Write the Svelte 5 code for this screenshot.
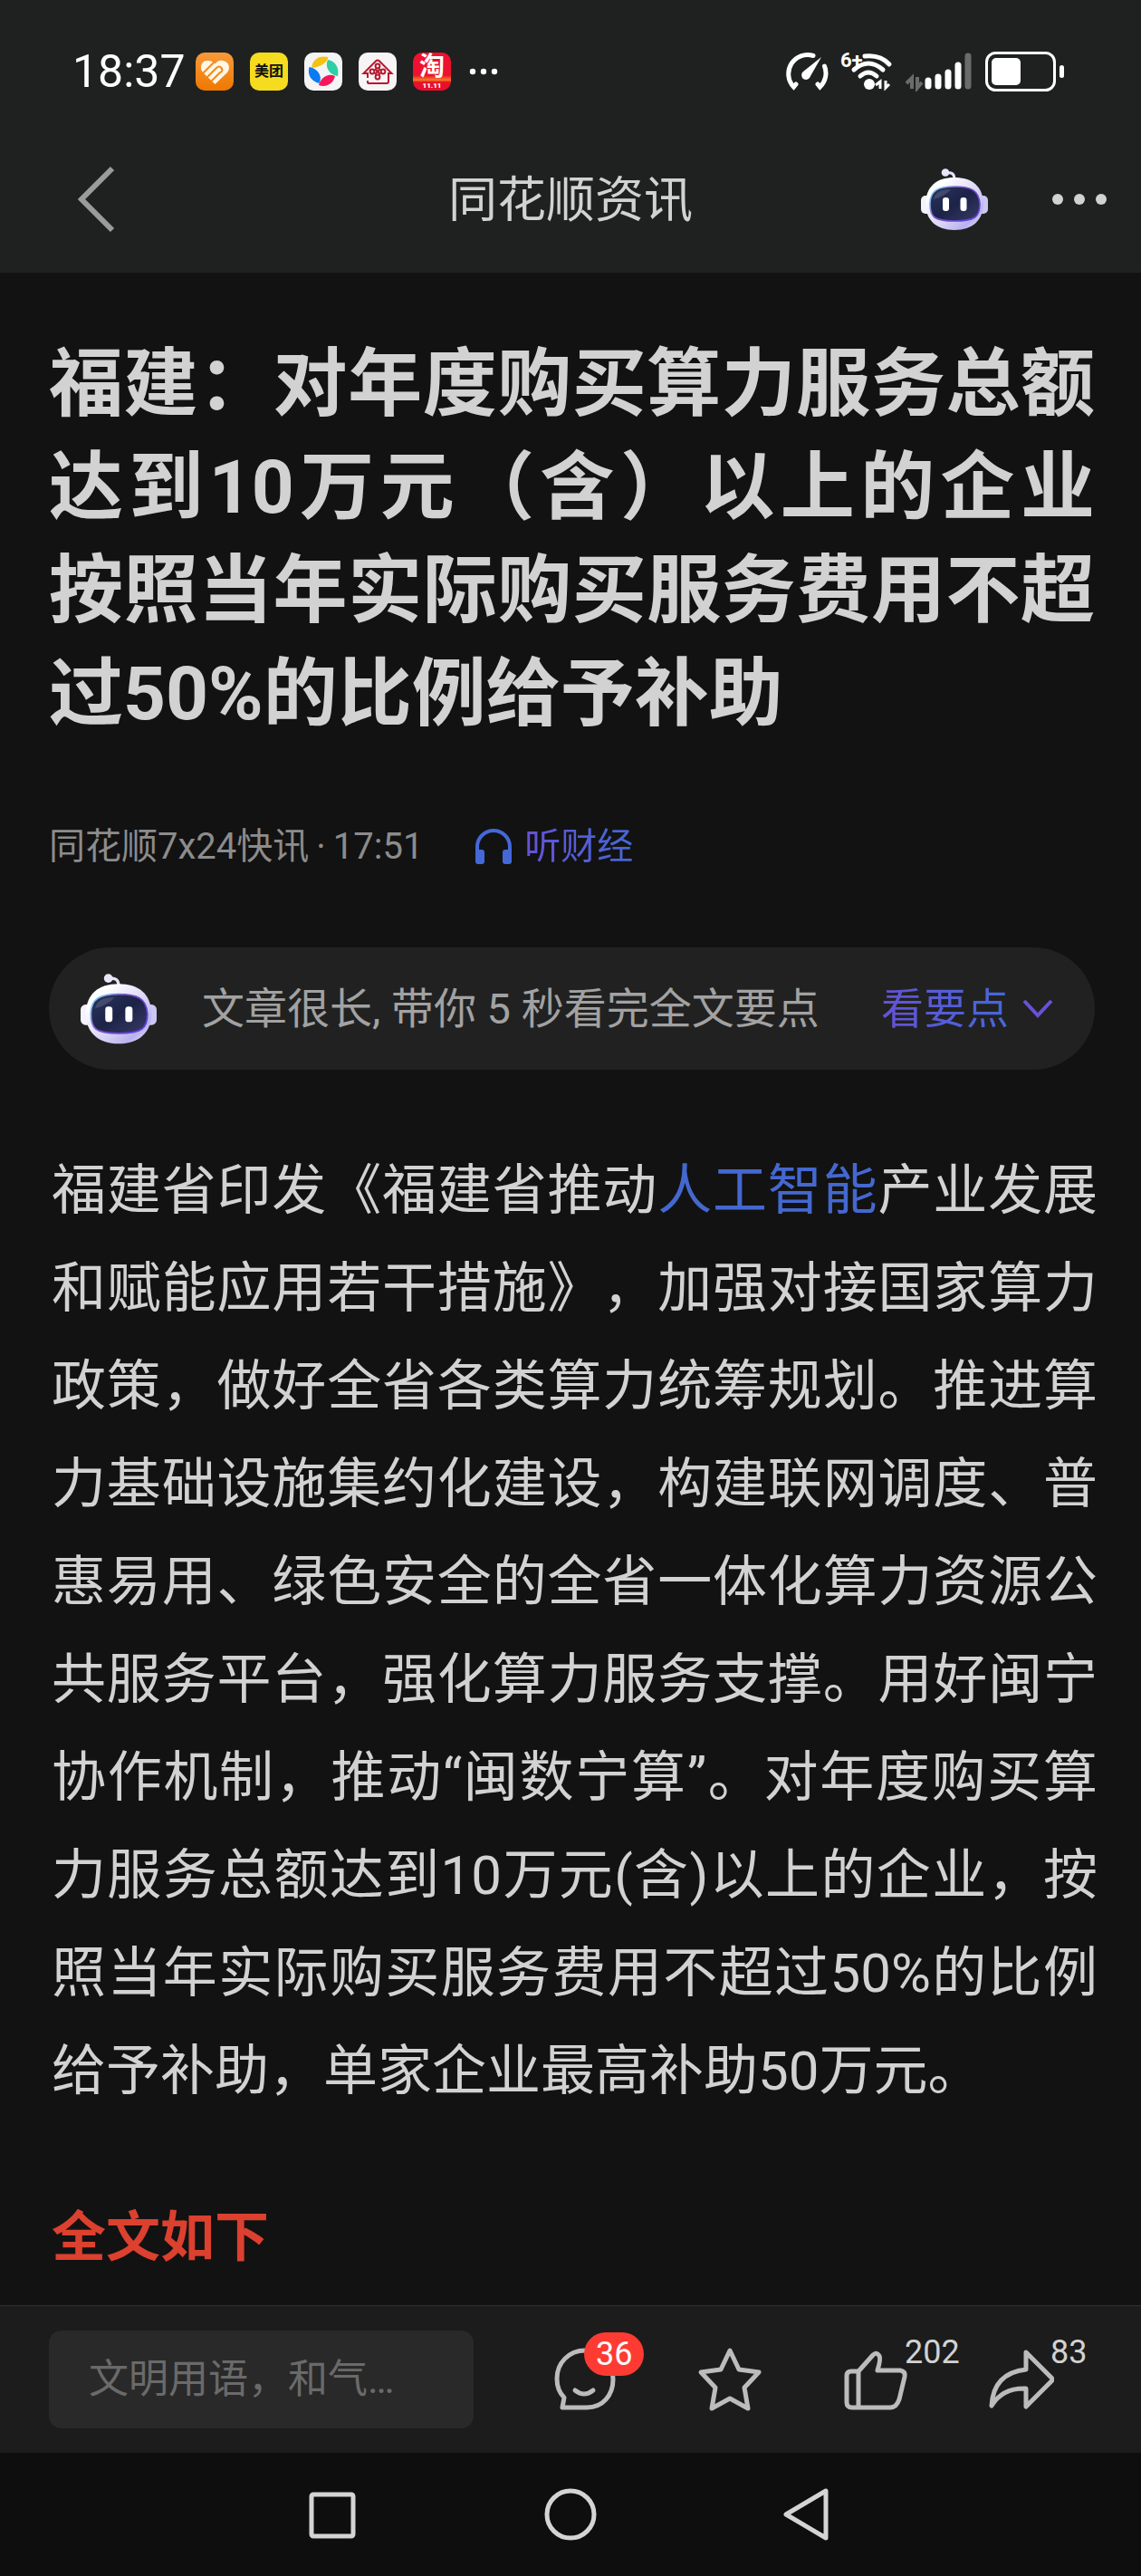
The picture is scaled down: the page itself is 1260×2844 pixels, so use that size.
<script lang="ts">
	let comment = $state('');
	let starred = $state(false);
	let likes = $state(202);
	let shares = $state(83);
	let comments = $state(36);

	function like() {
		likes += 1;
	}
</script>

<svelte:head>
	<title>同花顺资讯</title>
</svelte:head>

{#snippet robot(id: string)}
	<svg class="robot" viewBox="0 0 74 68" aria-hidden="true">
		<defs>
			<linearGradient id="{id}-shell" x1="0" y1="0" x2="1" y2="1">
				<stop offset="0.2" stop-color="#ffffff" />
				<stop offset="0.6" stop-color="#d6d1f5" />
				<stop offset="0.8" stop-color="#b9b2ee" />
				<stop offset="1" stop-color="#f1effc" />
			</linearGradient>
			<linearGradient id="{id}-rim" x1="0" y1="0.2" x2="1" y2="0.8">
				<stop offset="0" stop-color="#7fd0f0" />
				<stop offset="0.4" stop-color="#7a4fc4" />
				<stop offset="1" stop-color="#5b3fe0" />
			</linearGradient>
			<linearGradient id="{id}-face" x1="0" y1="0" x2="1" y2="1">
				<stop offset="0" stop-color="#2c3560" />
				<stop offset="0.5" stop-color="#1c2347" />
				<stop offset="1" stop-color="#383b66" />
			</linearGradient>
		</defs>
		<path d="M28 5 Q37 3 37 12" fill="none" stroke="#e6e2f8" stroke-width="3" />
		<circle cx="27" cy="4.5" r="4.3" fill="#e9e6fa" />
		<rect x="0" y="30" width="12" height="20" rx="5" fill="#f4f2fd" />
		<rect x="62" y="30" width="12" height="20" rx="5" fill="#cbc6f2" />
		<path
			d="M37 10 C57 10 68 20 69 38 C69 57 57 68 37 68 C17 68 5 57 5 38 C6 20 17 10 37 10Z"
			fill="url(#{id}-shell)"
		/>
		<path
			d="M37 20 C55 20 64 24 65 39 C65 53 60 58 37 58 C14 58 10 53 10 39 C10 24 19 20 37 20Z"
			fill="url(#{id}-face)"
			stroke="url(#{id}-rim)"
			stroke-width="1.6"
		/>
		<path d="M14 34 Q16 23 33 23 Q28 30 14 34Z" fill="#fff" opacity="0.14" />
		<rect x="24" y="32" width="7" height="15" rx="3" fill="#fff" />
		<rect x="43.5" y="32" width="7" height="15" rx="3" fill="#fff" />
	</svg>
{/snippet}

<div class="screen">
	<header>
		<div class="status">
			<span class="time">18:37</span>
			<div class="apps">
				<svg class="app" viewBox="0 0 42 42" aria-hidden="true">
					<defs>
						<linearGradient id="orange" x1="0" y1="0" x2="0" y2="1">
							<stop offset="0" stop-color="#f79a3a" />
							<stop offset="1" stop-color="#f07800" />
						</linearGradient>
					</defs>
					<rect width="42" height="42" fill="url(#orange)" />
					<path
						d="M21.5 35 L8 22 C4 17 6 9 13 9 C17 9 19 10 21.5 12.5 C24 9 27 8 30 9 C37 10 39 17 35 22Z"
						fill="#fff6e6"
					/>
					<path
						d="M8 23 L20.5 10.5 M12.5 27.5 L23 17 Q26 14 28.5 17 Q30.5 19.5 28 22 M17 32 L27.5 21.5"
						fill="none"
						stroke="#f38a1c"
						stroke-width="2"
					/>
				</svg>
				<span class="app meituan">美团</span>
				<svg class="app" viewBox="0 0 42 42" aria-hidden="true">
					<rect width="42" height="42" fill="#f4f4f4" />
					<path d="M8.5 14 C11 6 18 3 26.5 5 C25 11 20 15 8.5 17Z" fill="#f5c211" />
					<path d="M26 8 C34 9 39 17 37 26 C29 25 22 17 26 8Z" fill="#2ecfa5" />
					<path d="M5.5 16 C13 17 21 25 16.500 34 C8 32 3 25 5.5 16Z" fill="#0a7bf2" />
					<path d="M16 36 C18 28 26 22 34 26 C32 34 25 39 16 36Z" fill="#f5165b" />
				</svg>
				<svg class="app" viewBox="0 0 42 42" aria-hidden="true">
					<rect width="42" height="42" fill="#f6f4f4" />
					<g fill="none" stroke="#b5172f" stroke-width="2">
						<path
							d="M10 31 V33 Q10 34 12 34 H31 Q33 34 33 32 V23 H36.5 L23 9.5 Q21 7.5 19 9.5 L5.5 23 H10 V28"
						/>
						<circle cx="21" cy="15" r="2.4" />
						<circle cx="21" cy="27" r="2.4" />
						<circle cx="15" cy="21" r="2.4" />
						<circle cx="27" cy="21" r="2.4" />
						<path d="M18 18 L24 24 M24 18 L18 24" />
					</g>
				</svg>
				<span class="app taobao">
					<b>淘</b>
					<small>11.11</small>
				</span>
			</div>
			<svg class="more-apps" viewBox="0 0 32 8" aria-hidden="true">
				<circle cx="4" cy="4" r="3.2" />
				<circle cx="16" cy="4" r="3.2" />
				<circle cx="28" cy="4" r="3.2" />
			</svg>

			<div class="system">
				<svg width="48" height="44" viewBox="0 0 48 44" aria-hidden="true">
					<g fill="none" stroke="#fff" stroke-width="5" stroke-linecap="round">
						<path d="M31 4.5 A21 21 0 0 0 9.5 39 L12 36" />
						<path d="M43.5 16 A21 21 0 0 1 38.5 39 L36 36" />
					</g>
					<path d="M40 6 L28 27 A5 5 0 1 1 20 22Z" fill="#fff" />
				</svg>
				<div class="wifi">
					<span>6+</span>
					<svg width="58" height="44" viewBox="0 0 58 44" aria-hidden="true">
						<g fill="none" stroke="#fff" stroke-width="5" stroke-linecap="round">
							<path d="M27 5 Q44 3 54 14" />
							<path d="M15 20 Q31 6 47 20" />
							<path d="M22 27 Q31 19 40 27" />
						</g>
						<circle cx="32" cy="36" r="6" fill="#fff" />
						<path d="M44 41 V33 L39 37 M50 32 V40 L54 36" fill="none" stroke="#fff" stroke-width="3" />
					</svg>
				</div>
				<svg width="76" height="44" viewBox="0 0 76 44" aria-hidden="true">
					<path d="M8 41 V29 L2 35 M14 28 V40 L19 34" fill="none" stroke="#6a6b6a" stroke-width="4" />
					<g stroke-width="7" stroke-linecap="round" stroke="#fff">
						<path d="M26 32 V38" />
						<path d="M37 28 V38" />
						<path d="M48 23 V38" />
						<path d="M59 15 V38" />
						<path d="M70 5 V38" stroke="#6a6b6a" />
					</g>
				</svg>
				<svg width="88" height="44" viewBox="0 0 88 44" aria-hidden="true">
					<rect x="1.5" y="1.5" width="75" height="41" rx="10" fill="none" stroke="#fff" stroke-width="3" />
					<rect x="7" y="7" width="32" height="30" rx="5" fill="#fff" />
					<rect x="82" y="15" width="5" height="14" rx="2.5" fill="#fff" />
				</svg>
			</div>
		</div>

		<div class="titlebar">
			<button class="back" aria-label="返回">
				<svg width="42" height="74" viewBox="0 0 42 74">
					<path d="M38 3 L4 37 L38 71" fill="none" stroke="#9a9b9a" stroke-width="6" />
				</svg>
			</button>
			<span class="channel">同花顺资讯</span>
			<div class="tools">
				<button class="assistant" aria-label="智能助手">{@render robot('top')}</button>
				<button aria-label="更多">
					<svg width="62" height="14" viewBox="0 0 62 14" fill="#d2d2d2">
						<circle cx="7" cy="7" r="6" />
						<circle cx="31" cy="7" r="6" />
						<circle cx="55" cy="7" r="6" />
					</svg>
				</button>
			</div>
		</div>
	</header>

	<main>
		<h1>
			福建：对年度购买算力服务总额达到10万元（含）以上的企业按照当年实际购买服务费用不超过50%的比例给予补助
		</h1>

		<div class="meta">
			<div class="source">
				<span>同花顺7x24快讯</span>
				<span>·</span>
				<time>17:51</time>
			</div>
			<button class="listen">
				<svg width="44" height="40" viewBox="0 0 44 40" aria-hidden="true">
					<path d="M4 28 V20 A18 18 0 0 1 40 20 V28" fill="none" stroke="#4468d8" stroke-width="4" />
					<rect x="2" y="23" width="10" height="16" rx="3" fill="#4468d8" />
					<rect x="32" y="23" width="10" height="16" rx="3" fill="#4468d8" />
				</svg>
				<span class="gradient">听财经</span>
			</button>
		</div>

		<div class="summary">
			{@render robot('card')}
			<span class="hint">文章很长, 带你 5 秒看完全文要点</span>
			<button>
				<span class="gradient">看要点</span>
				<svg width="34" height="24" viewBox="0 0 34 24" aria-hidden="true">
					<path d="M2 3 L17 19 L32 3" fill="none" stroke="#6a50d8" stroke-width="4" />
				</svg>
			</button>
		</div>

		<p>
			福建省印发《福建省推动<a href="#ai">人工智能</a>产业发展和赋能应用若干措施》，加强对接国家算力政策，做好全省各类算力统筹规划。推进算力基础设施集约化建设，构建联网调度、普惠易用、绿色安全的全省一体化算力资源公共服务平台，强化算力服务支撑。用好闽宁协作机制，推动“闽数宁算”。对年度购买算力服务总额达到10万元(含)以上的企业，按照当年实际购买服务费用不超过50%的比例给予补助，单家企业最高补助50万元。
		</p>

		<h2>全文如下</h2>
	</main>

	<footer>
		<div class="actions">
			<input type="text" aria-label="评论" placeholder="文明用语，和气…" bind:value={comment} />
			<div class="buttons">
				<button aria-label="查看评论">
					<svg width="72" height="72" viewBox="0 0 72 72">
						<path
							d="M12 67 H39 C57 67 68 53 68 36 C68 18 55 4 37 4 C19 4 6 18 6 35 C6 44 9 51 14 56Z"
						/>
						<path d="M26 48 Q36 56 46 48" />
					</svg>
					<span class="badge">{comments}</span>
				</button>
				<button aria-label="收藏" aria-pressed={starred} onclick={() => (starred = !starred)}>
					<svg width="72" height="72" viewBox="0 0 72 72">
						<path
							d="M36 4 L46 25 L68 28 L52 45 L56 68 L36 57 L16 68 L20 45 L4 28 L26 25Z"
						/>
					</svg>
				</button>
				<button aria-label="点赞" onclick={like}>
					<svg width="72" height="72" viewBox="0 0 72 72">
						<path
							d="M17 27 L33 9 Q37 5 40 10 Q42 13 38 26 H63 Q69 27 68 33 L62 58 Q59 67 52 67 H10 Q4 67 4 61 V32 Q4 27 9 27Z M17 27 V67"
						/>
					</svg>
					<span class="count">{likes}</span>
				</button>
				<button aria-label="分享">
					<svg width="72" height="72" viewBox="0 0 72 72">
						<path
							d="M41 25 V6 L69 34 Q71 36 69 38 L41 66 V46 Q15 45 3 65 Q5 29 41 25Z"
						/>
					</svg>
					<span class="count">{shares}</span>
				</button>
			</div>
		</div>

		<nav>
			<button aria-label="最近任务">
				<svg width="60" height="60" viewBox="0 0 60 60">
					<rect x="6" y="8" width="46" height="46" rx="2" />
				</svg>
			</button>
			<button aria-label="主页">
				<svg width="60" height="60" viewBox="0 0 60 60">
					<circle cx="30" cy="30" r="26" />
				</svg>
			</button>
			<button aria-label="后退">
				<svg width="60" height="60" viewBox="0 0 60 60">
					<path d="M50 4 V56 L6 30Z" />
				</svg>
			</button>
		</nav>
	</footer>
</div>

<style>
	:global(body) {
		background: #121212;
	}

	.screen {
		display: flex;
		flex-direction: column;
		min-height: 100vh;
		background: #121212;
		color: #d2d2d2;
		font-family: Roboto, 'Noto Sans CJK SC', sans-serif;
		text-spacing-trim: space-all;
	}

	button {
		display: flex;
		align-items: center;
		padding: 0;
		border: none;
		background: none;
		color: inherit;
		font: inherit;
		cursor: pointer;
	}

	svg {
		display: block;
		flex: none;
	}

	header {
		background: #1f2120;
	}

	.status {
		display: flex;
		align-items: center;
		height: 158px;
		padding: 0 84px 0 80px;
		color: #fff;
	}

	.time {
		width: 136px;
		font-size: 50px;
		line-height: 60px;
	}

	.apps {
		display: flex;
		gap: 18px;
	}

	.app {
		width: 42px;
		height: 42px;
		border-radius: 10px;
		overflow: hidden;
	}

	.meituan {
		background: #f5dc1e;
		color: #111;
		font-size: 16px;
		font-weight: 700;
		line-height: 42px;
		text-align: center;
	}

	.taobao {
		display: flex;
		flex-direction: column;
		align-items: center;
		background: linear-gradient(#ee1230 60%, #f08020 72%, #e8102c 78%);
	}

	.taobao b {
		font-size: 28px;
		line-height: 32px;
	}

	.taobao small {
		font-size: 8px;
		font-weight: 900;
		line-height: 10px;
	}

	.more-apps {
		width: 32px;
		margin-left: 20px;
		fill: #fff;
	}

	.system {
		display: flex;
		align-items: center;
		gap: 13px;
		margin-left: auto;
	}

	.wifi {
		position: relative;
	}

	.wifi span {
		position: absolute;
		top: -4px;
		left: 0;
		font-size: 22px;
		font-weight: 700;
		line-height: 28px;
	}

	.titlebar {
		display: grid;
		grid-template-columns: 1fr auto 1fr;
		align-items: center;
		height: 143px;
		padding: 0 37px 20px;
		box-sizing: border-box;
	}

	.back {
		padding-left: 49px;
	}

	.channel {
		padding-top: 4px;
		font-size: 54px;
		line-height: 64px;
	}

	.tools {
		display: flex;
		align-items: center;
		justify-content: flex-end;
		gap: 70px;
	}

	.robot {
		width: 84px;
		overflow: visible;
	}

	.assistant .robot {
		width: 74px;
	}

	main {
		flex: 1;
		padding: 66px 51px 32px 54px;
	}

	h1 {
		margin: 0 0 88px;
		font-size: 82px;
		font-weight: 700;
		line-height: 114px;
		text-align: justify;
	}

	.meta {
		display: flex;
		align-items: center;
		gap: 56px;
		margin-bottom: 87px;
		color: #8c8c8c;
		font-size: 40px;
		line-height: 48px;
	}

	.source {
		display: flex;
		gap: 8px;
	}

	.listen {
		gap: 12px;
	}

	.gradient {
		background: linear-gradient(90deg, #6552d6, #4468d8);
		background-clip: text;
		color: transparent;
	}

	.summary {
		display: flex;
		align-items: center;
		height: 135px;
		padding: 0 46px 0 35px;
		border-radius: 68px;
		background: #212121;
		font-size: 47px;
		line-height: 56px;
	}

	.hint {
		margin-left: 50px;
		color: #a2a2a2;
	}

	.summary button {
		gap: 15px;
		margin-left: auto;
	}

	p {
		margin: 80px -3px 94px 3px;
		font-size: 60px;
		line-height: 108px;
		text-align: justify;
	}

	a {
		color: #4468d0;
		text-decoration: none;
	}

	h2 {
		margin: 0 3px;
		color: #dc402f;
		font-size: 60px;
		font-weight: 700;
		line-height: 72px;
	}

	.actions {
		display: flex;
		align-items: center;
		height: 163px;
		padding: 0 96px 0 54px;
		border-top: 1px solid #303030;
		box-sizing: border-box;
		background: #1c1c1c;
	}

	input {
		flex: 1;
		min-width: 0;
		height: 108px;
		padding: 0 44px;
		border: none;
		border-radius: 14px;
		box-sizing: border-box;
		background: #292929;
		color: #d2d2d2;
		font-family: inherit;
		font-size: 44px;
	}

	input::placeholder {
		color: #6a6a6a;
	}

	.buttons {
		display: flex;
		gap: 89px;
		margin-left: 86px;
	}

	.buttons button {
		position: relative;
	}

	.buttons svg {
		fill: none;
		stroke: #bcbcbc;
		stroke-width: 5;
		stroke-linejoin: round;
		stroke-linecap: round;
	}

	.badge,
	.count {
		position: absolute;
		font-size: 36px;
	}

	.badge {
		top: -16px;
		left: 36px;
		padding: 0 13px;
		border-radius: 24px;
		background: #fd3b33;
		color: #fff;
		line-height: 48px;
	}

	.count {
		top: -14px;
		left: 68px;
		line-height: 40px;
	}

	nav {
		display: flex;
		justify-content: center;
		gap: 202px;
		height: 136px;
		background: #0e0e0e;
	}

	nav svg {
		fill: none;
		stroke: #d4d4d4;
		stroke-width: 5;
		stroke-linejoin: round;
	}
</style>
